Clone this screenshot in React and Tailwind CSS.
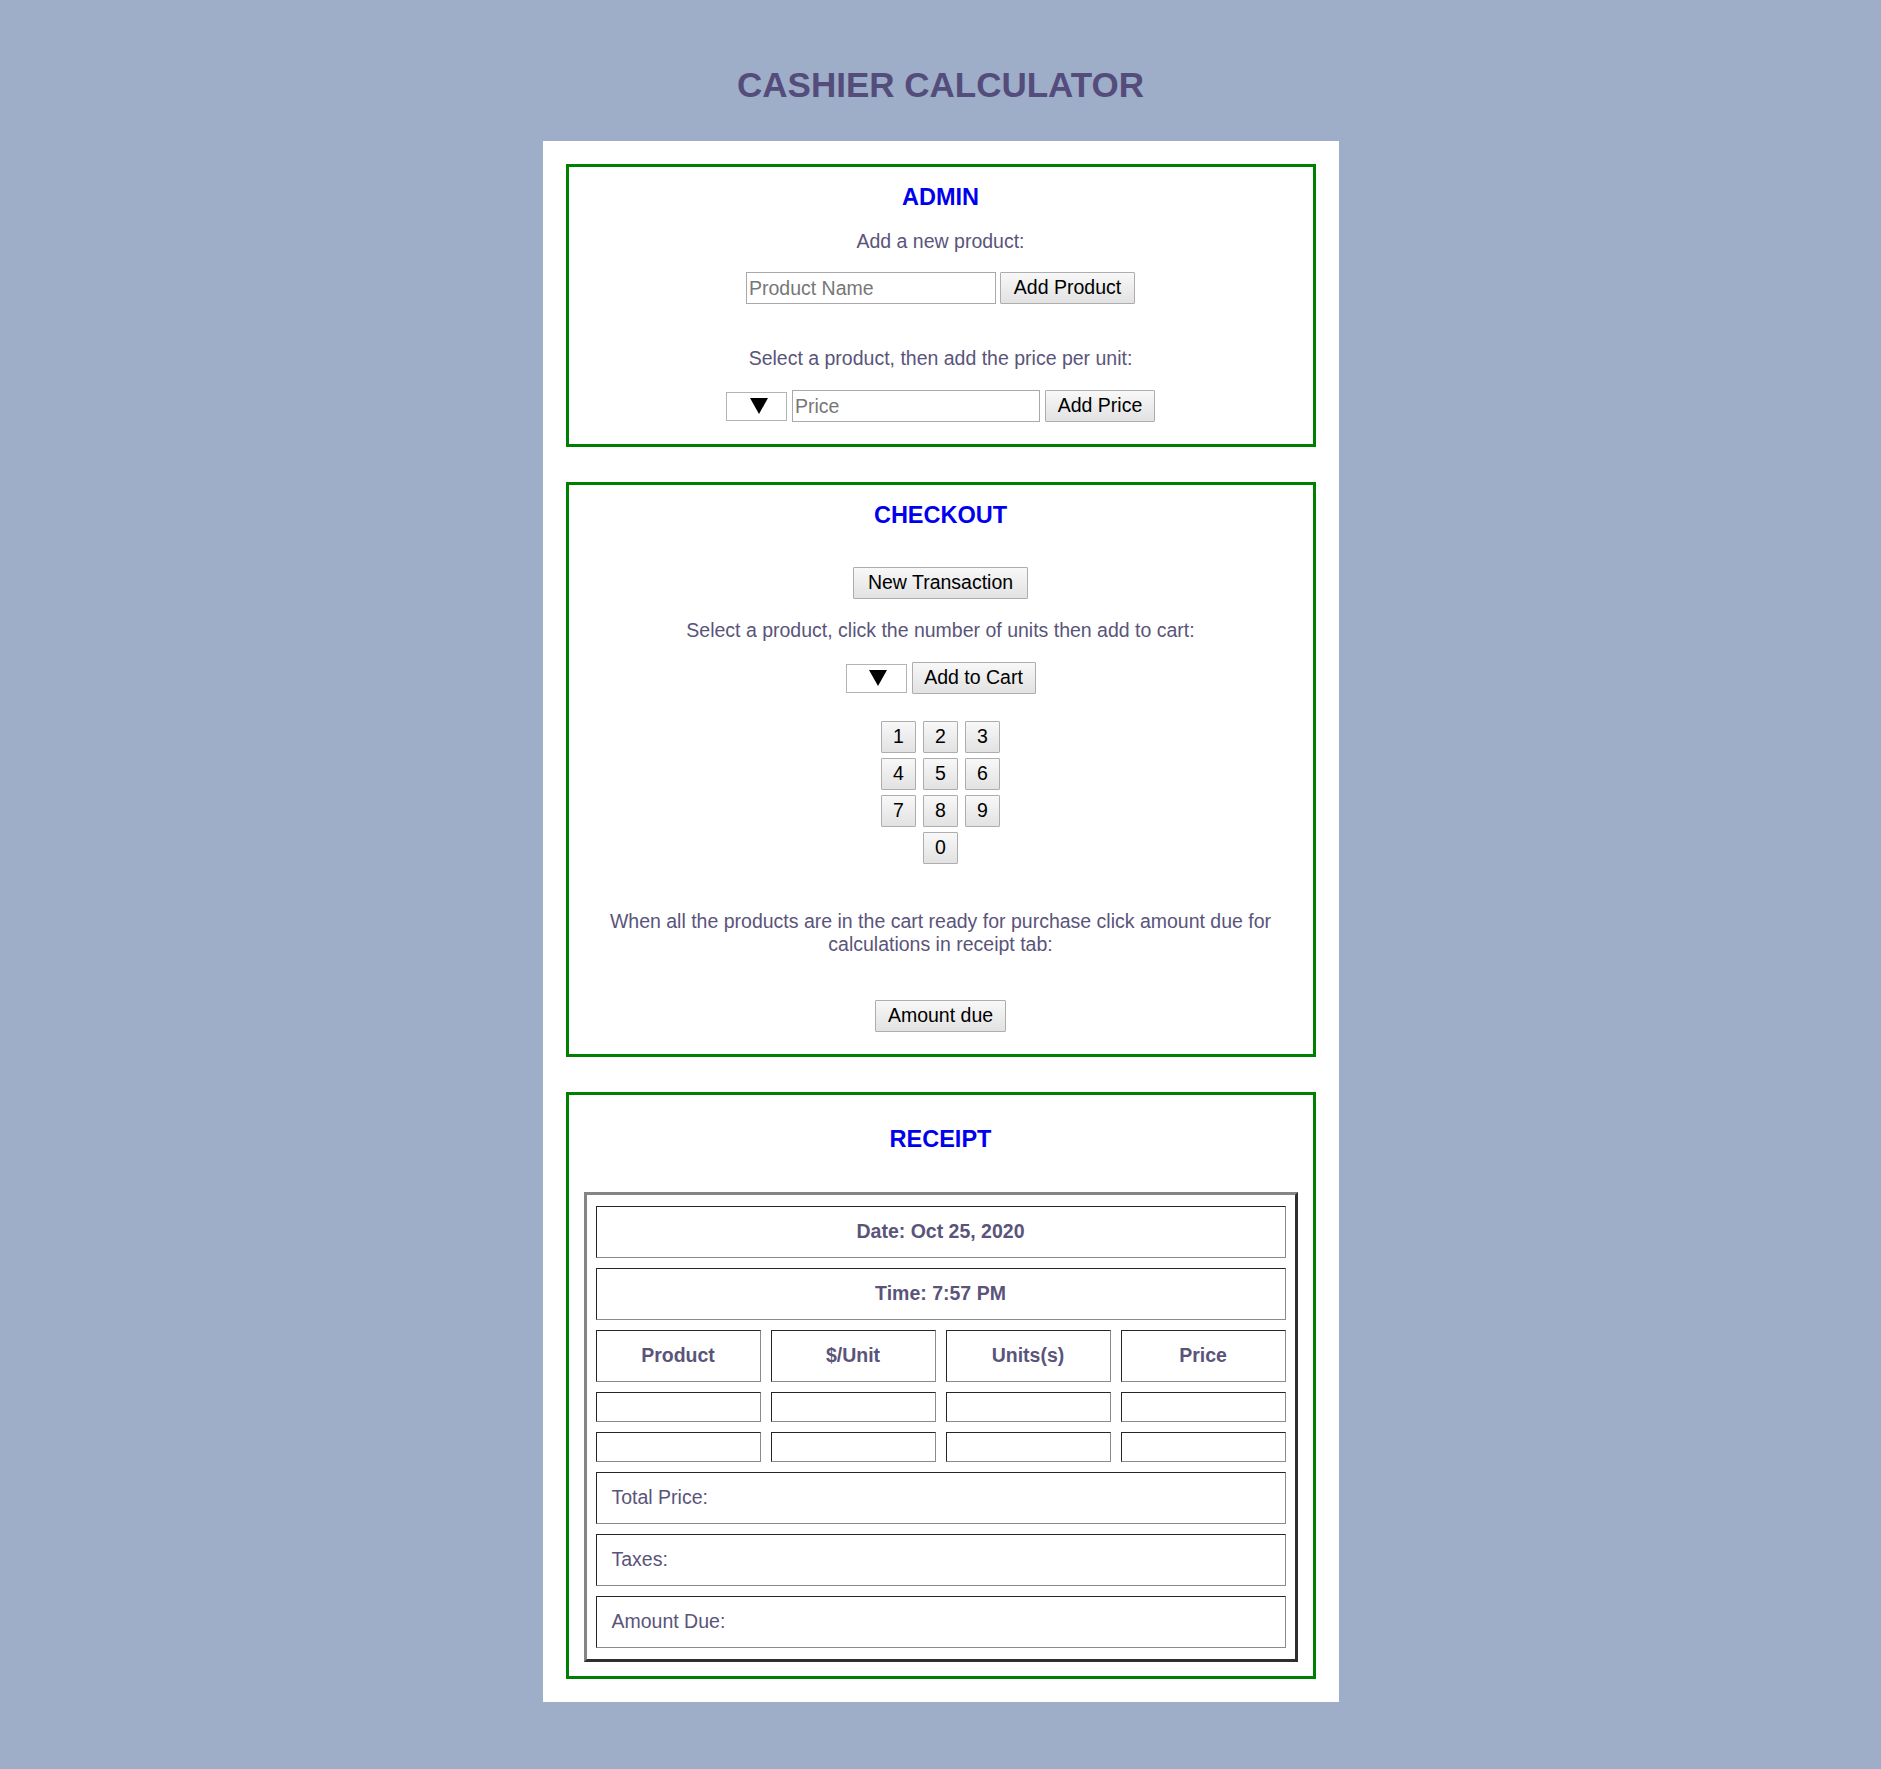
import { useState } from "react";

const btn =
  "h-[32px] border border-[#adadad] bg-linear-to-b from-[#f8f8f8] to-[#e2e2e2] text-[19.5px] leading-none text-black rounded-[1px]";

function Caret() {
  return (
    <div className="w-[61px] h-[29px] border border-[#b4b4b4] bg-white flex items-center justify-center">
      <svg width="20" height="18" viewBox="0 0 20 18" className="ml-[4px]">
        <polygon points="1,1 19,1 10,17" fill="#000" />
      </svg>
    </div>
  );
}

function Cell({ children, className = "" }) {
  return (
    <div
      className={
        "border border-t-[#262626] border-l-[#262626] border-b-[#8a8a8a] border-r-[#8a8a8a] " +
        className
      }
    >
      {children}
    </div>
  );
}

export default function App() {
  const [units, setUnits] = useState(null);
  const keys = ["1", "2", "3", "4", "5", "6", "7", "8", "9"];

  return (
    <div className="min-h-[1769px] bg-[#9eaec9] pt-[65px] font-['Liberation_Sans',Arial,sans-serif] text-[#5a547b]">
      <h1 className="text-center text-[35px] leading-[40px] font-bold text-[#544c7b]">
        CASHIER CALCULATOR
      </h1>

      <div className="mx-auto mt-[36px] w-[796px] bg-white p-[23px] flex flex-col gap-[35px]">
        {/* Admin */}
        <section className="border-[3px] border-[#008000] pt-[16px] pb-[22px] flex flex-col items-center">
          <h2 className="text-[23.5px] leading-[28px] font-bold text-[#0000ee]">ADMIN</h2>
          <p className="mt-[19px] text-[19.5px] leading-[22px]">Add a new product:</p>
          <div className="mt-[20px] flex gap-[4px]">
            <input
              placeholder="Product Name"
              className="w-[250px] h-[32px] border border-[#a9a9a9] px-[2px] text-[19.5px] text-black placeholder:text-[#777] outline-none"
            />
            <button className={btn + " w-[135px]"}>Add Product</button>
          </div>
          <p className="mt-[43px] text-[19.5px] leading-[22px]">
            Select a product, then add the price per unit:
          </p>
          <div className="mt-[21px] flex items-center gap-[5px]">
            <Caret />
            <input
              placeholder="Price"
              className="w-[248px] h-[32px] border border-[#a9a9a9] px-[2px] text-[19.5px] text-black placeholder:text-[#777] outline-none"
            />
            <button className={btn + " w-[110px]"}>Add Price</button>
          </div>
        </section>

        {/* Checkout */}
        <section className="border-[3px] border-[#008000] pt-[16px] pb-[22px] flex flex-col items-center">
          <h2 className="text-[23.5px] leading-[28px] font-bold text-[#0000ee]">CHECKOUT</h2>
          <button className={btn + " mt-[38px] w-[175px]"}>New Transaction</button>
          <p className="mt-[20px] text-[19.5px] leading-[22px]">
            Select a product, click the number of units then add to cart:
          </p>
          <div className="mt-[21px] flex items-center gap-[5px]">
            <Caret />
            <button className={btn + " w-[124px]"}>Add to Cart</button>
          </div>
          <div className="mt-[27px] grid grid-cols-3 gap-x-[7px] gap-y-[5px]">
            {keys.map((k) => (
              <button
                key={k}
                onClick={() => setUnits(k)}
                className={btn + " w-[35px]" + (units === k ? " border-[#777]" : "")}
              >
                {k}
              </button>
            ))}
            <button className={btn + " w-[35px] col-start-2"}>0</button>
          </div>
          <p className="mt-[46px] px-[40px] text-center text-[19.5px] leading-[23px]">
            When all the products are in the cart ready for purchase click amount due for
            calculations in receipt tab:
          </p>
          <button className={btn + " mt-[44px] w-[131px]"}>Amount due</button>
        </section>

        {/* Receipt */}
        <section className="border-[3px] border-[#008000] pt-[30px] pb-[14px] px-[15px] flex flex-col items-center">
          <h2 className="text-[23.5px] leading-[28px] font-bold text-[#0000ee]">RECEIPT</h2>
          <div className="mt-[39px] w-full border-[3px] border-t-[#858585] border-l-[#858585] border-b-[#2e2e2e] border-r-[#2e2e2e] px-[9px] py-[11px] flex flex-col gap-[10px]">
            <Cell className="h-[52px] flex items-center justify-center font-bold text-[19.5px]">
              Date: Oct 25, 2020
            </Cell>
            <Cell className="h-[52px] flex items-center justify-center font-bold text-[19.5px]">
              Time: 7:57 PM
            </Cell>
            <div className="grid grid-cols-4 gap-x-[10px]">
              {["Product", "$/Unit", "Units(s)", "Price"].map((h) => (
                <Cell key={h} className="h-[52px] flex items-center justify-center font-bold text-[19.5px]">
                  {h}
                </Cell>
              ))}
            </div>
            {[0, 1].map((r) => (
              <div key={r} className="grid grid-cols-4 gap-x-[10px]">
                {[0, 1, 2, 3].map((c) => (
                  <Cell key={c} className="h-[30px]" />
                ))}
              </div>
            ))}
            {["Total Price:", "Taxes:", "Amount Due:"].map((t) => (
              <Cell key={t} className="h-[52px] flex items-center pl-[15px] text-[19.5px]">
                {t}
              </Cell>
            ))}
          </div>
        </section>
      </div>
    </div>
  );
}
